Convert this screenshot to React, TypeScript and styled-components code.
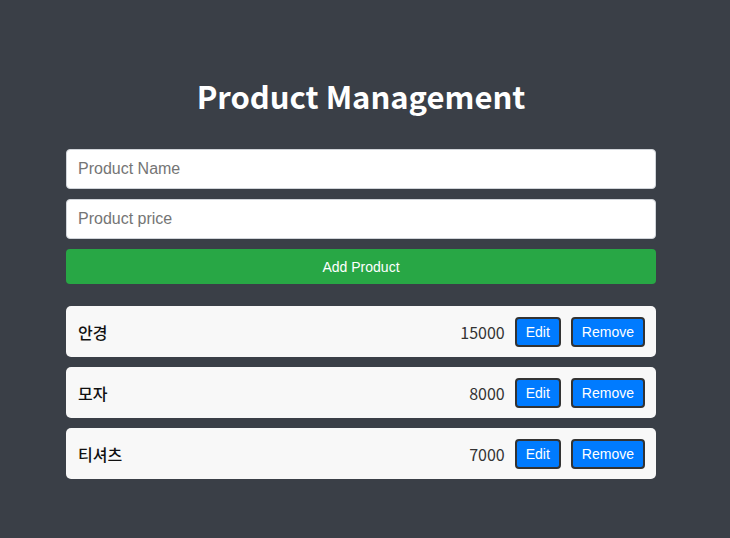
import React from "react";
import styled, { createGlobalStyle } from "styled-components";

const GlobalStyle = createGlobalStyle`
  html, body {
    margin: 0;
    padding: 0;
    background: #3a3f47;
  }
  body {
    font-family: "Noto Sans CJK KR", "Noto Sans", sans-serif;
  }
`;

const Page = styled.div`
  display: flex;
  justify-content: center;
  padding: 0 8px 0 0;
  min-height: 538px;
  box-sizing: border-box;
`;

const Container = styled.div`
  width: 590px;
  padding-top: 74px;
  display: flex;
  flex-direction: column;
`;

const Title = styled.h1`
  margin: 0 0 31px;
  text-align: center;
  color: #ffffff;
  font-family: "Noto Sans CJK KR", "Noto Sans", sans-serif;
  font-weight: 700;
  font-size: 31px;
  line-height: 44px;
`;

const Form = styled.div`
  display: flex;
  flex-direction: column;
  gap: 10px;
`;

const Input = styled.input`
  box-sizing: border-box;
  width: 100%;
  height: 40px;
  padding: 0 11px;
  border: 1px solid #d0d4d9;
  border-radius: 4px;
  background: #ffffff;
  font-family: "Liberation Sans", Arial, sans-serif;
  font-size: 16px;
  color: #333;
  outline: none;
  &::placeholder {
    color: #757575;
  }
`;

const AddButton = styled.button`
  box-sizing: border-box;
  height: 35px;
  border: none;
  border-radius: 4px;
  background: #28a745;
  color: #ffffff;
  font-family: "Liberation Sans", Arial, sans-serif;
  font-size: 14px;
  cursor: pointer;
`;

const List = styled.ul`
  list-style: none;
  margin: 22px 0 0;
  padding: 0;
  display: flex;
  flex-direction: column;
  gap: 10px;
`;

const Item = styled.li`
  box-sizing: border-box;
  height: 51px;
  display: flex;
  align-items: center;
  padding: 0 11px 0 12px;
  background: #f8f8f8;
  border-radius: 5px;
`;

const Name = styled.span`
  flex: 1;
  font-family: "Noto Sans CJK KR", sans-serif;
  font-size: 16px;
  font-weight: 500;
  color: #111;
`;

const Price = styled.span`
  font-family: "Noto Sans CJK KR", sans-serif;
  font-size: 16px;
  color: #333;
  margin-right: 10px;
`;

const ActionButton = styled.button<{ $gap?: boolean }>`
  box-sizing: border-box;
  height: 30px;
  padding: 0 9px;
  margin-left: ${(p) => (p.$gap ? "10px" : "0")};
  border: 2px solid #333;
  border-radius: 4px;
  background: #007bff;
  color: #ffffff;
  font-family: "Liberation Sans", Arial, sans-serif;
  font-size: 14px;
  cursor: pointer;
`;

const products = [
  { name: "안경", price: 15000 },
  { name: "모자", price: 8000 },
  { name: "티셔츠", price: 7000 },
];

export default function App() {
  return (
    <>
      <GlobalStyle />
      <Page>
        <Container>
          <Title>Product Management</Title>
          <Form>
            <Input placeholder="Product Name" />
            <Input placeholder="Product price" />
            <AddButton>Add Product</AddButton>
          </Form>
          <List>
            {products.map((p) => (
              <Item key={p.name}>
                <Name>{p.name}</Name>
                <Price>{p.price}</Price>
                <ActionButton>Edit</ActionButton>
                <ActionButton $gap>Remove</ActionButton>
              </Item>
            ))}
          </List>
        </Container>
      </Page>
    </>
  );
}
